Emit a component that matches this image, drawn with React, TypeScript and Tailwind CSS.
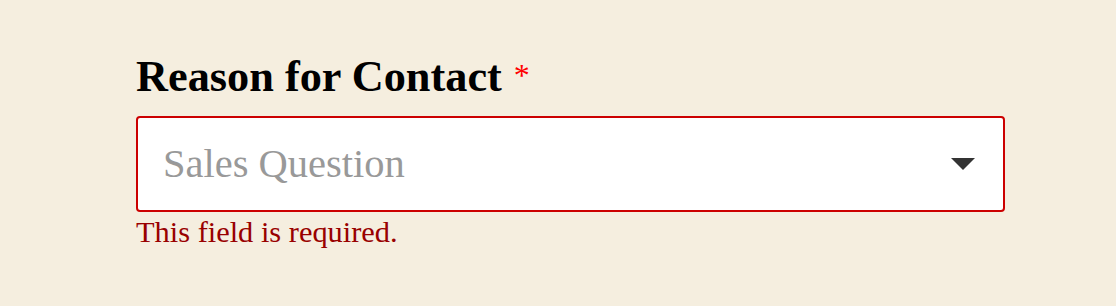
import React from "react";

export default function App() {
  return (
    <div
      className="w-[1116px] h-[306px] bg-[#f5eedf] pt-[55px] pl-[136px]"
      style={{ fontFamily: '"Liberation Serif", "Times New Roman", serif' }}
    >
      <div className="w-[869px]">
        <label className="flex items-start gap-[12px] text-[44.3px] leading-[44px] font-bold text-black">
          <span>Reason for Contact</span>
          <span className="text-[#ff0000] font-normal text-[32px] leading-[32px] mt-[4px]">*</span>
        </label>
        <div className="mt-[17px] relative h-[96px] bg-white border-2 border-[#cc0000] rounded-[4px] flex items-center pl-[25px] pr-[28px]">
          <span className="flex-1 text-[40.5px] text-[#999999] leading-none">Sales Question</span>
          <svg width="24" height="12" viewBox="0 0 24 12" className="shrink-0">
            <polygon points="0,0 24,0 12,12" fill="#333333" />
          </svg>
        </div>
        <p className="mt-[3px] text-[30.4px] leading-[34px] text-[#990000]">This field is required.</p>
      </div>
    </div>
  );
}
